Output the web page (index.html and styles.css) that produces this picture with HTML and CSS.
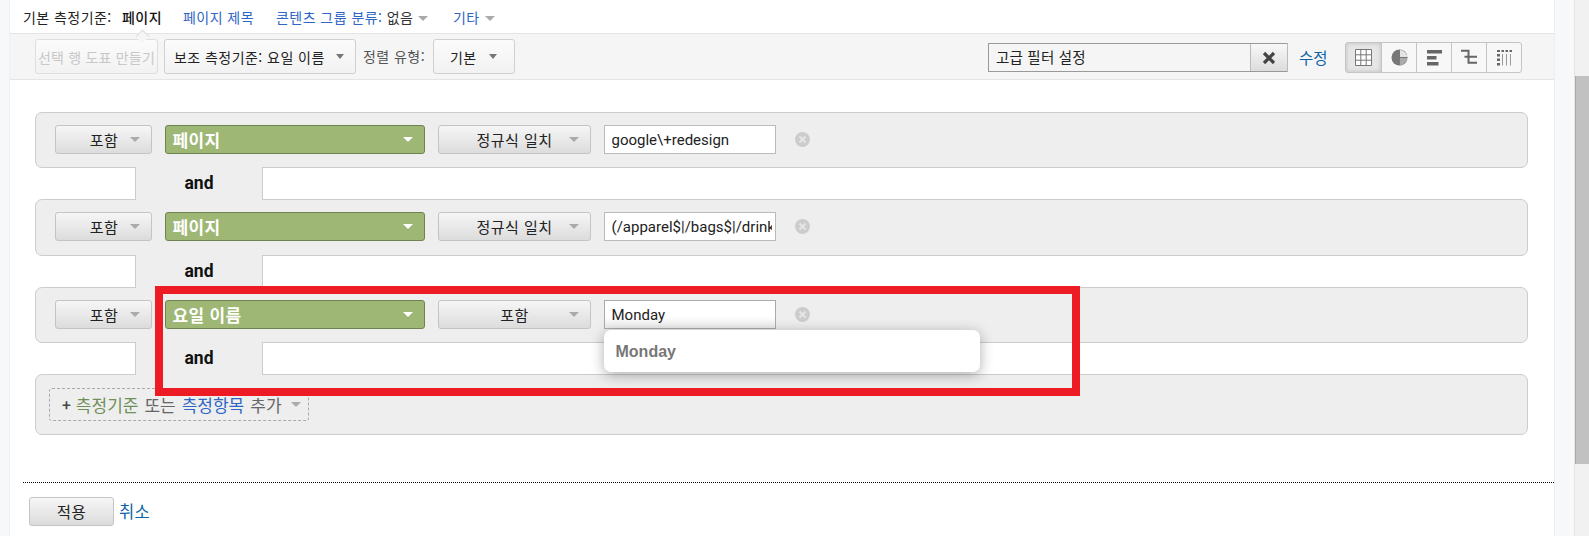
FILE: index.html
```html
<!DOCTYPE html>
<html lang="ko">
<head>
<meta charset="utf-8">
<title>고급 필터 설정</title>
<link rel="stylesheet" href="styles.css">
</head>
<body>
<div class="app">
  <div class="rail-left"></div>
  <main class="main">
    <nav class="tabs">
      <span class="tab-label">기본 측정기준:</span>
      <span class="tab tab-active">페이지</span>
      <a class="tab tab-title">페이지 제목</a>
      <a class="tab tab-group">콘텐츠 그룹 분류: <span class="tab-dark">없음</span><i class="caret caret-tab"></i></a>
      <a class="tab tab-more">기타<i class="caret caret-tab"></i></a>
    </nav>
    <div class="toolbar">
      <button class="tool tool-chart">선택 행 도표 만들기</button>
      <button class="tool tool-secondary">보조 측정기준: 요일 이름<i class="caret caret-dark"></i></button>
      <span class="sort-label">정렬 유형:</span>
      <button class="tool tool-sort">기본<i class="caret caret-dark"></i></button>
      <div class="adv">
        <span class="adv-text">고급 필터 설정</span>
        <button class="adv-x" aria-label="닫기">
          <svg width="14" height="14" viewBox="0 0 14 14"><path d="M2 2l10 10M12 2L2 12" stroke="#444" stroke-width="3.200"/></svg>
        </button>
      </div>
      <a class="edit">수정</a>
      <div class="views">
        <span class="view view-on">
          <svg width="17" height="17" viewBox="0 0 17 17"><path d="M.5.5h16v16H.5zM5.800.5v16M11.200.5v16M.5 5.800h16M.5 11.200h16" fill="#fff" stroke="#777"/></svg>
        </span>
        <span class="view">
          <svg width="17" height="17" viewBox="0 0 17 17"><circle cx="8.500" cy="8.500" r="8" fill="#777"/><path d="M9 1a8 8 0 0 1 7.500 7H9z" fill="#e4e4e4"/><path d="M9 9h7.400A8 8 0 0 1 9 16.400z" fill="#aaa"/></svg>
        </span>
        <span class="view">
          <svg width="17" height="17" viewBox="0 0 17 17"><path d="M1 1h15v3.400H1zM1 7h9.500v3.400H1zM1 13h11.500v3.400H1z" fill="#666"/></svg>
        </span>
        <span class="view">
          <svg width="17" height="17" viewBox="0 0 17 17"><path d="M0 1.800h8.500M7.500 .8v14M3.500 7.800H16M7.500 13.800H16" fill="none" stroke="#666" stroke-width="2"/></svg>
        </span>
        <span class="view">
          <svg width="17" height="17" viewBox="0 0 17 17"><path d="M1 1h3v2H1zM5.500 1H8v2H5.500zM9.500 1H12v2H9.500zM13.500 1H16v2h-2.500zM1 5h3v2.500H1zM1 9.500h3V12H1zM1 14h3v2.500H1z" fill="#666"/><path d="M6.500 5v11.500M10.500 5v11.500M14.500 5v11.500" stroke="#999"/></svg>
        </span>
      </div>
    </div>

    <section class="filters">
      <div class="group">
        <button class="sel sel-inc"><span class="sel-label">포함</span><i class="caret"></i></button>
        <button class="dim">페이지<i class="caret caret-white"></i></button>
        <button class="sel sel-op"><span class="sel-label">정규식 일치</span><i class="caret"></i></button>
        <div class="field"><span class="field-text">google\+redesign</span></div>
        <svg class="clear" width="15" height="15" viewBox="0 0 15 15"><circle cx="7.500" cy="7.500" r="7.500" fill="#ccc"/><path d="M4.500 4.500l6 6M10.500 4.500l-6 6" stroke="#e6e6e6" stroke-width="2"/></svg>
      </div>
      <div class="conn">and</div>
      <div class="group">
        <button class="sel sel-inc"><span class="sel-label">포함</span><i class="caret"></i></button>
        <button class="dim">페이지<i class="caret caret-white"></i></button>
        <button class="sel sel-op"><span class="sel-label">정규식 일치</span><i class="caret"></i></button>
        <div class="field"><span class="field-text">(/apparel$|/bags$|/drinkware$)</span></div>
        <svg class="clear" width="15" height="15" viewBox="0 0 15 15"><circle cx="7.500" cy="7.500" r="7.500" fill="#ccc"/><path d="M4.500 4.500l6 6M10.500 4.500l-6 6" stroke="#e6e6e6" stroke-width="2"/></svg>
      </div>
      <div class="conn">and</div>
      <div class="group">
        <button class="sel sel-inc"><span class="sel-label">포함</span><i class="caret"></i></button>
        <button class="dim">요일 이름<i class="caret caret-white"></i></button>
        <button class="sel sel-op"><span class="sel-label">포함</span><i class="caret"></i></button>
        <div class="field field-focus">
          <span class="field-text">Monday</span>
          <div class="suggest">Monday</div>
        </div>
        <svg class="clear" width="15" height="15" viewBox="0 0 15 15"><circle cx="7.500" cy="7.500" r="7.500" fill="#ccc"/><path d="M4.500 4.500l6 6M10.500 4.500l-6 6" stroke="#e6e6e6" stroke-width="2"/></svg>
      </div>
      <div class="conn">and</div>
      <div class="group group-add">
        <div class="add"><b class="plus">+</b><span class="add-dim">측정기준</span><span class="add-or">또는</span><span class="add-met">측정항목</span><span class="add-last">추가</span><i class="caret"></i></div>
      </div>
    </section>

    <footer class="actions">
      <button class="sel apply">적용</button>
      <a class="cancel">취소</a>
    </footer>
    <div class="highlight"></div>
  </main>
  <div class="rail-right"></div>
  <div class="scrollbar"><div class="thumb"></div></div>
</div>
</body>
</html>
```
FILE: styles.css
```css
* { box-sizing: border-box; }
html, body { margin: 0; height: 100%; overflow: hidden; background: #fff; }
body { font-family: "Noto Sans CJK KR", "Liberation Sans", sans-serif; font-size: 14px; letter-spacing: .45px; color: #222; }
button { font: inherit; letter-spacing: inherit; color: inherit; margin: 0; padding: 0; }
a { color: #2f66c5; }

.app { display: flex; height: 536px; }
.rail-left { width: 10px; background: #f7f8fa; border-right: 1px solid #f1f1f3; }
.rail-right { width: 20px; background: #f7f8fa; border-left: 1px solid #eeeef0; }
.main { position: relative; width: 1544px; background: #fff; display: flex; flex-direction: column; }
.scrollbar { width: 15px; background: #f1f1f1; border-left: 1px solid #e4e4e4; }
.thumb { margin-top: 76px; height: 388px; background: #c1c1c1; border-left: 1px solid #aaa; }

.caret { display: inline-block; flex: none; width: 0; height: 0; border-left: 5.500px solid transparent; border-right: 5.500px solid transparent; border-top: 5px solid #aaa; }
.caret-dark { border-left-width: 4.500px; border-right-width: 4.500px; border-top-color: #777; }
.caret-white { border-top-color: #fff; }
.caret-tab { margin-left: 5px; vertical-align: 2px; border-top-color: #aaa; }

.tabs { height: 33px; display: flex; align-items: center; padding-left: 13px; line-height: 20px; white-space: nowrap; }
.tab-label { width: 99px; }
.tab { display: block; }
.tab-active { position: relative; width: 61px; color: #111; font-weight: 500; }
.tab-active::after { content: ""; position: absolute; left: 15px; top: 24px; width: 10px; height: 10px; background: #f5f5f5; border-left: 1px solid #ddd; border-top: 1px solid #ddd; transform: rotate(45deg) scale(.9); }
.tab-title { width: 93px; }
.tab-group { width: 177px; }
.tab-dark { color: #333; }

.toolbar { height: 47px; background: #f5f5f5; border-top: 1px solid #e4e4e4; border-bottom: 1px solid #e4e4e4; display: flex; align-items: flex-start; padding: 5px 32px 0 25px; white-space: nowrap; }
.tool { height: 35px; background: linear-gradient(#fbfbfb, #f2f2f2); border: 1px solid #d0d0d0; border-radius: 3px; display: flex; align-items: center; justify-content: space-between; }
.tool-chart { width: 123px; justify-content: center; color: #c8c8c8; border-color: #dedede; letter-spacing: .2px; overflow: hidden; }
.tool-secondary { width: 192px; margin-left: 6px; padding: 0 11px 0 9px; }
.sort-label { margin-left: 7px; width: 70px; line-height: 35px; color: #555; }
.tool-sort { width: 82px; padding: 0 17px 0 16px; }

.adv { margin-left: auto; margin-top: 4px; width: 300px; height: 29px; display: flex; border: 1px solid #999; border-right-color: #bbb; border-radius: 1px; background: #f5f5f5; }
.adv-text { flex: 1; padding-left: 7px; line-height: 25px; font-size: 14.500px; letter-spacing: .2px; color: #222; }
.adv-x { width: 37px; border: 0; border-left: 1px solid #bbb; background: linear-gradient(#f8f8f8, #dcdcdc); display: flex; align-items: center; justify-content: center; }
.edit { margin: 4px 0 0 11px; width: 46px; line-height: 29px; font-size: 15.500px; letter-spacing: 0; color: #0b62a8; }
.views { display: flex; width: 177px; height: 31px; margin-top: 3px; border: 1px solid #c4c4c4; border-radius: 3px; background: #f7f7f7; }
.view { width: 35px; display: flex; align-items: center; justify-content: center; border-left: 1px solid #c4c4c4; }
.view:first-child { border-left: 0; }
.view-on { background: #e6e6e6; box-shadow: inset 0 0 4px #bbb; }

.filters { padding: 32px 26px 0 25px; }
.group { height: 56.350px; display: flex; align-items: flex-start; padding: 12px 0 0 19px; background: #eee; border: 1px solid #ccc; border-radius: 7px; }
.conn { position: relative; z-index: 1; width: 128px; height: 33px; margin: -1px 0 -1px 100px; background: #eee; border-left: 1px solid #ccc; border-right: 1px solid #ccc; font-family: Roboto, "Liberation Sans", sans-serif; font-weight: 700; font-size: 17.500px; letter-spacing: 0; line-height: 33px; color: #111; text-align: center; }

.sel { height: 29px; background: linear-gradient(#f6f6f6, #dcdcdc); border: 1px solid #c4c4c4; border-radius: 3px; font-size: 15px; letter-spacing: .5px; color: #222; display: flex; align-items: center; white-space: nowrap; }
.sel-label { flex: 1; text-align: center; }
.sel-inc { width: 97px; padding: 0 11px 0 26px; gap: 4px; }
.sel-op { width: 153px; margin-left: 13px; padding: 0 11px 0 26px; gap: 4px; }
.dim { width: 260px; height: 29px; margin-left: 12.500px; padding: 0 11px 0 7px; background: #9eb775; border: 1px solid #6f8350; border-radius: 3px; color: #fff; font-weight: 700; font-size: 17px; letter-spacing: .3px; display: flex; align-items: center; justify-content: space-between; }
.field { position: relative; width: 172px; height: 29px; margin-left: 13px; padding: 0 3px 0 7px; background: #fff; border: 1px solid #bbb; font-family: Roboto, "Liberation Sans", sans-serif; font-size: 15px; letter-spacing: 0; line-height: 28px; color: #222; }
.field-text { display: block; overflow: hidden; white-space: nowrap; }
.field-focus { background: linear-gradient(#fff 55%, #ececec); border-color: #aaa; }
.clear { margin: 7px 0 0 19px; }
.suggest { position: absolute; z-index: 3; left: -1px; top: 29px; width: 376px; height: 42px; padding-left: 12px; background: #fff; border-radius: 7px; box-shadow: 0 3px 14px rgba(0, 0, 0, .32); font-family: "Liberation Sans", sans-serif; font-weight: 700; font-size: 16px; line-height: 44px; color: #777; }

.group-add { height: 60.500px; padding: 13px 0 0 13px; }
.add { width: 260px; height: 33px; display: flex; align-items: center; padding-left: 12px; border: 1px dashed #aaa; border-radius: 3px; font-size: 17px; letter-spacing: 0; white-space: nowrap; color: #666; }
.plus { color: #444; margin-right: 5px; font-size: 15px; }
.add-dim { color: #6f8f58; margin-right: 6px; }
.add-met { color: #2f66c5; margin-right: 6px; }
.add-or { margin-right: 6px; }
.add .caret { margin-left: 9px; }

.actions { margin: 47px 0 0 13px; border-top: 1px dotted #000; padding: 14px 0 0 6px; display: flex; align-items: center; }
.apply { width: 85px; justify-content: center; font-size: 15.500px; }
.cancel { margin-left: 5px; font-size: 16.500px; letter-spacing: .2px; color: #0b62a8; }

.highlight { position: absolute; z-index: 2; left: 145px; top: 286px; width: 925px; height: 110px; border: 8px solid #ed1c24; pointer-events: none; }
```
